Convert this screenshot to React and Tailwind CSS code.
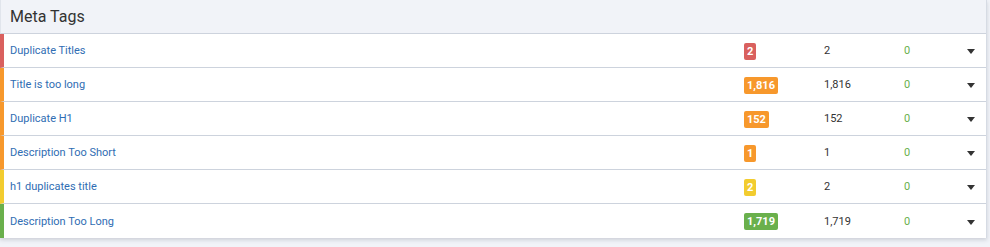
import React from "react";

const rows = [
  { name: "Duplicate Titles", count: "2", bar: "border-l-[#d9605e]", badge: "bg-[#d9605e]" },
  { name: "Title is too long", count: "1,816", bar: "border-l-[#f7982c]", badge: "bg-[#f7982c]" },
  { name: "Duplicate H1", count: "152", bar: "border-l-[#f7982c]", badge: "bg-[#f7982c]" },
  { name: "Description Too Short", count: "1", bar: "border-l-[#f7982c]", badge: "bg-[#f7982c]" },
  { name: "h1 duplicates title", count: "2", bar: "border-l-[#f2cc2f]", badge: "bg-[#f2cc2f]" },
  { name: "Description Too Long", count: "1,719", bar: "border-l-[#6ab04c]", badge: "bg-[#6ab04c]" },
];

const Caret = () => (
  <svg width="8" height="5" viewBox="0 0 8 5" className="block">
    <path d="M0 0h8L4 5z" fill="#333" />
  </svg>
);

export default function App() {
  return (
    <div className="w-[990px] h-[247px] bg-[#f1f3f8] font-['Roboto',sans-serif]">
      <div className="w-[987px] bg-white border-r border-[#d6dbe4] shadow-[0_2px_4px_rgba(60,70,90,0.2)]">
        <div className="h-[34px] bg-[#f1f3f8] border-b border-[#cdd3dd] border-l border-l-[#e1e5ec] flex items-center pl-[9px]">
          <h2 className="text-[16px] text-[#333] leading-none">Meta Tags</h2>
        </div>
        {rows.map((r, i) => (
          <div
            key={i}
            className={`h-[34px] flex items-center pt-[2px] border-l-4 ${r.bar} ${i < rows.length - 1 ? "border-b border-b-[#cdd3dd]" : ""} text-[11px]`}
          >
            <a className="flex-1 pl-[6px] text-[#2f6db3] cursor-pointer">{r.name}</a>
            <div className="w-[80px]">
              <span className={`inline-block ${r.badge} text-white font-bold rounded-[2px] px-[3px] leading-[17px]`}>
                {r.count}
              </span>
            </div>
            <div className="w-[80px] text-[#333]">{r.count}</div>
            <div className="w-[63px] text-[#6ab04c]">0</div>
            <div className="w-[19px]">
              <Caret />
            </div>
          </div>
        ))}
      </div>
    </div>
  );
}
